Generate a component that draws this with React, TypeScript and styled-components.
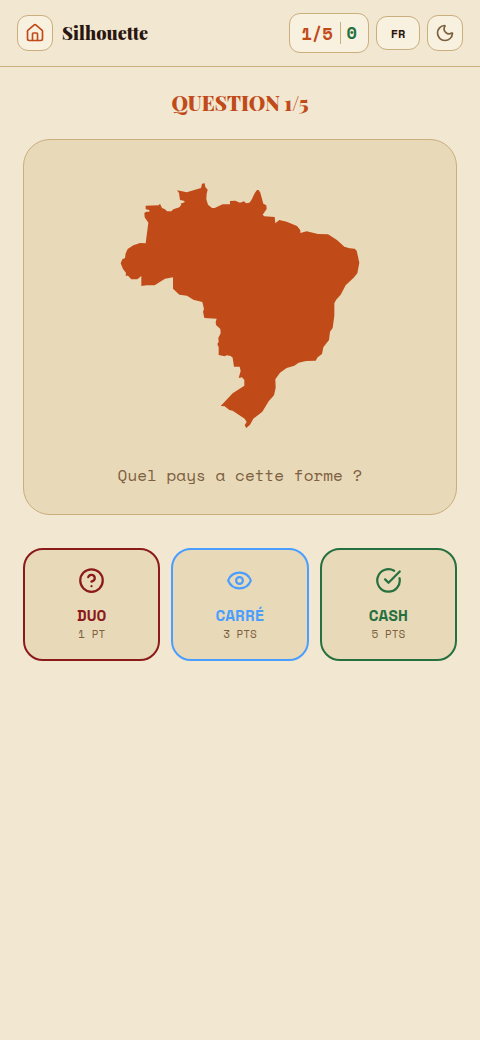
import React from "react";
import styled, { createGlobalStyle } from "styled-components";
import { House, Moon, CircleQuestionMark, Eye, CircleCheckBig } from "lucide-react";

const serif = '"Playfair Display", "Liberation Serif", serif';
const mono = '"Space Mono", "Liberation Mono", monospace';

const GlobalStyle = createGlobalStyle`
  *, *::before, *::after { box-sizing: border-box; }
  body { margin: 0; background: #f2e7d0; color: #2a1610; font-family: ${mono}; }
  button { font: inherit; color: inherit; cursor: pointer; }
  h1, h2, p { margin: 0; }
`;

const Header = styled.header`
  display: flex;
  align-items: center;
  justify-content: space-between;
  height: 67px;
  padding: 0 17px;
  border-bottom: 1px solid #c9ae7e;
`;

const Group = styled.div<{ $gap: number }>`
  display: flex;
  align-items: center;
  gap: ${(p) => p.$gap}px;
`;

const IconButton = styled.button<{ $color: string }>`
  display: flex;
  align-items: center;
  justify-content: center;
  width: 36px;
  height: 36px;
  padding: 0;
  border: 1px solid #c9ae7e;
  border-radius: 11px;
  background: #f8f1e0;
  color: ${(p) => p.$color};
`;

const LanguageButton = styled.button`
  width: 44px;
  height: 34px;
  padding: 0;
  border: 1px solid #c9ae7e;
  border-radius: 11px;
  background: #f8f1e0;
  font-size: 12px;
  font-weight: 700;
`;

const Title = styled.h1`
  font-family: ${serif};
  font-size: 18px;
  font-weight: 900;
  line-height: 28px;
`;

const Score = styled.div`
  display: flex;
  align-items: center;
  height: 40px;
  padding: 0 11px;
  gap: 7px;
  border: 1px solid #c9ae7e;
  border-radius: 11px;
  background: #f8f1e0;
  font-size: 17px;
  font-weight: 700;
`;

const Progress = styled.span`
  color: #c14a19;
`;

const Points = styled.span`
  padding-left: 6px;
  border-left: 1px solid #c9ae7e;
  line-height: 22px;
  color: #26703f;
`;

const Main = styled.main`
  padding: 22px 23px;
`;

const Heading = styled.h2`
  font-family: ${serif};
  font-size: 20px;
  font-weight: 900;
  line-height: 28px;
  text-align: center;
  color: #c14a19;
`;

const Card = styled.section`
  display: flex;
  flex-direction: column;
  align-items: center;
  margin-top: 22px;
  padding: 30px 22px 26px;
  border: 1px solid #c9ae7e;
  border-radius: 27px;
  background: #e8d9b8;
`;

const Shape = styled.svg`
  display: block;
  width: 260px;
  height: 260px;
`;

const Prompt = styled.p`
  margin-top: 32px;
  font-size: 16px;
  line-height: 26px;
  color: #7c603f;
`;

const Choices = styled.div`
  display: grid;
  grid-template-columns: repeat(3, 1fr);
  gap: 11px;
  margin-top: 33px;
`;

const Choice = styled.button<{ $color: string }>`
  display: flex;
  flex-direction: column;
  align-items: center;
  height: 113px;
  padding: 17px 10px;
  border: 2px solid ${(p) => p.$color};
  border-radius: 20px;
  background: #e8d9b8;
  color: ${(p) => p.$color};
`;

const ChoiceName = styled.span`
  margin-top: 9px;
  font-size: 16px;
  font-weight: 700;
  line-height: 24px;
`;

const ChoicePoints = styled.span`
  font-size: 11px;
  line-height: 14px;
  color: #7c603f;
`;

const brazil =
  "M107 107L146 106L150 101L156 114L165 118L171 124H184L190 118L208 112L214 104L212 101L225 96L221 92L210 90L207 69L201 61L216 64L230 67L273 54L276 41L284 40L286 51L293 59L290 71L289 88L294 104L306 114L314 114L338 103L360 103L360 93L376 92L390 98L402 94L408 100L418 98L424 91L434 70L441 60L446 60L451 68L460 101L469 106L470 117L458 134L463 139L494 141L496 160L508 150L530 155L561 168L571 181V189L590 184L624 192L654 193L681 210L703 230L719 235L734 236L740 242L748 278L742 310L731 323L707 346L692 374L678 390L673 400L673 437L668 474L660 485L657 510L640 532L636 552L623 562L617 572L588 573L566 578L553 587L530 594L510 608L496 628L497 653L492 676L476 694L457 725L430 746L420 764L409 774L404 766L410 756L404 746L368 722L358 720L344 709L332 708L368 670L403 647L403 630L396 622L386 624L392 603L389 590L372 590L368 563L362 558L350 556L344 559L326 555L326 532L322 522L326 516L325 504L332 490L331 477L318 465L317 456L320 446L283 444L279 425L282 417L277 396L250 389L231 377L208 374L189 356L189 322L165 326L134 346L110 346L94 348L94 318L82 328L64 328L54 317L47 317L48 309L39 297L32 280L37 268L45 264L47 250L53 237L70 226L90 219L107 220L115 158L104 142L103 129L109 125H118V120L107 118Z";

const choices = [
  { name: "DUO", points: "1 PT", color: "#8b1a1a", Icon: CircleQuestionMark },
  { name: "CARRÉ", points: "3 PTS", color: "#4a9eff", Icon: Eye },
  { name: "CASH", points: "5 PTS", color: "#26703f", Icon: CircleCheckBig },
];

export default function App() {
  return (
    <>
      <GlobalStyle />
      <Header>
        <Group $gap={9}>
          <IconButton $color="#c14a19" aria-label="Accueil">
            <House size={20} />
          </IconButton>
          <Title>Silhouette</Title>
        </Group>
        <Group $gap={7}>
          <Score>
            <Progress>1/5</Progress>
            <Points>0</Points>
          </Score>
          <LanguageButton>FR</LanguageButton>
          <IconButton $color="#7c603f" aria-label="Mode sombre">
            <Moon size={20} />
          </IconButton>
        </Group>
      </Header>
      <Main>
        <Heading>QUESTION 1/5</Heading>
        <Card>
          <Shape viewBox="0 0 780 780" role="img" aria-label="Silhouette">
            <path d={brazil} fill="#c14a19" />
          </Shape>
          <Prompt>Quel pays a cette forme ?</Prompt>
        </Card>
        <Choices>
          {choices.map(({ name, points, color, Icon }) => (
            <Choice key={name} $color={color}>
              <Icon size={27} />
              <ChoiceName>{name}</ChoiceName>
              <ChoicePoints>{points}</ChoicePoints>
            </Choice>
          ))}
        </Choices>
      </Main>
    </>
  );
}
